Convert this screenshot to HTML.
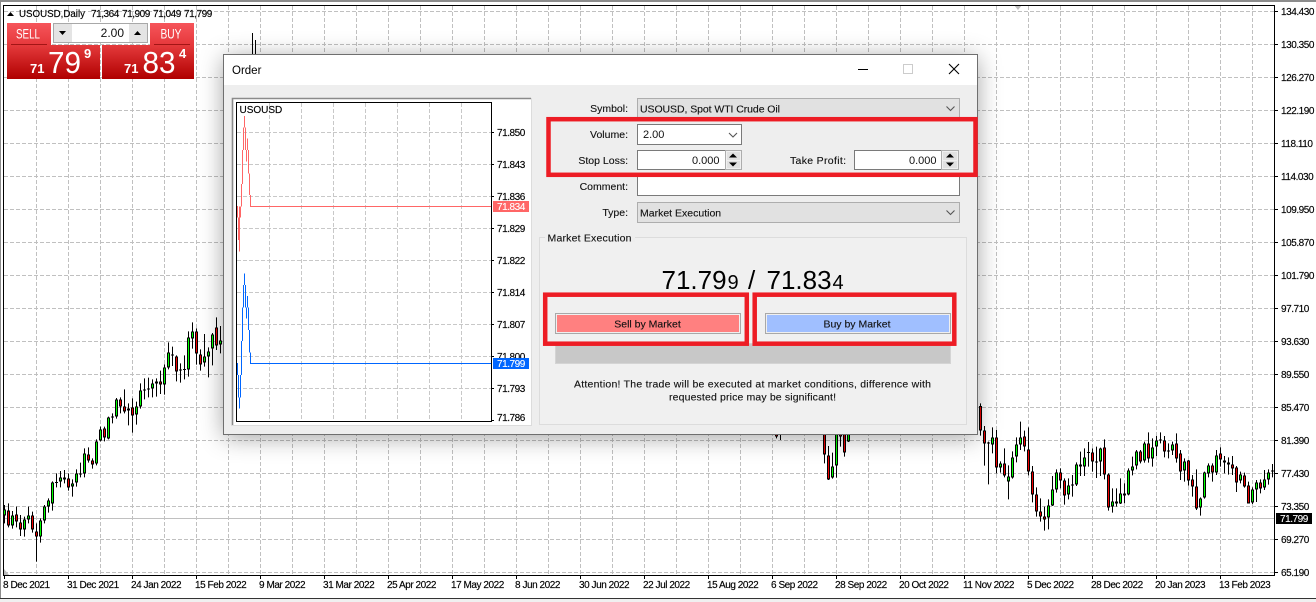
<!DOCTYPE html>
<html><head><meta charset="utf-8"><title>Order</title>
<style>
html,body{margin:0;padding:0;background:#fff;width:1316px;height:602px;overflow:hidden}
svg{display:block;font-family:"Liberation Sans",sans-serif}
.a{font-size:10px;letter-spacing:-.45px;fill:#000;stroke:#000;stroke-width:.15px}
.l{font-size:10.5px;fill:#111;stroke:#111;stroke-width:.12px}
.w{stroke:#fff;stroke-width:.12px}
</style></head><body>
<svg width="1316" height="602" viewBox="0 0 1316 602">
<rect width="1316" height="602" fill="#fff"/>
<rect x="0" y="0" width="1316" height="2" fill="#8c8c8c"/>
<rect x="0" y="0" width="1" height="598" fill="#8c8c8c"/>
<rect x="0" y="598" width="1316" height="1" fill="#333"/>
<rect x="0" y="599" width="1316" height="3" fill="#f0f0f0"/>

<!-- grid -->
<g stroke="#c0c0c0" stroke-dasharray="4 2" shape-rendering="crispEdges" fill="none">
<path d="M4 11.5H1274M4 44.5H1274M4 77.5H1274M4 110.5H1274M4 143.5H1274M4 176.5H1274M4 209.5H1274M4 242.5H1274M4 275.5H1274M4 308.5H1274M4 341.5H1274M4 374.5H1274M4 407.5H1274M4 440.5H1274M4 473.5H1274M4 506.5H1274M4 539.5H1274M4 572.5H1274"/>
<path d="M36.5 6V575M68.5 6V575M100.5 6V575M132.5 6V575M164.5 6V575M196.5 6V575M228.5 6V575M260.5 6V575M292.5 6V575M324.5 6V575M356.5 6V575M388.5 6V575M420.5 6V575M452.5 6V575M484.5 6V575M516.5 6V575M548.5 6V575M580.5 6V575M612.5 6V575M644.5 6V575M676.5 6V575M708.5 6V575M740.5 6V575M772.5 6V575M804.5 6V575M836.5 6V575M868.5 6V575M900.5 6V575M932.5 6V575M964.5 6V575M996.5 6V575M1028.5 6V575M1060.5 6V575M1092.5 6V575M1124.5 6V575M1156.5 6V575M1188.5 6V575M1220.5 6V575M1252.5 6V575"/>
</g>
<path d="M4 518.5H1274" stroke="#c0c0c0" shape-rendering="crispEdges"/>
<polygon points="1014,5 1022,5 1018,10" fill="#c0c0c0"/>
<polygon points="4,569 4,575 9,575" fill="#bbb"/>

<!-- left candles -->
<g transform="translate(0 310) scale(1 .33333)" fill="none" shape-rendering="crispEdges">
<path stroke="#000" d="M4.5 585V640M8.5 580V652M12.5 603V656M16.5 590V652M20.5 615V678M24.5 620V680M28.5 590V640M32.5 605V668M36.5 640V755M40.5 625V698M44.5 585V640M48.5 565V608M52.5 514V602M56.5 490V532M60.5 483V532M64.5 480V520M68.5 490V542M72.5 508V560M76.5 478V530M80.5 458V502M84.5 415V502M88.5 412V458M92.5 445V476M96.5 388V466M100.5 350V394M104.5 350V394M108.5 320V388M112.5 310V340M116.5 264V326M120.5 262V310M124.5 238V310M128.5 280V346M132.5 265V368M136.5 275V344M140.5 220V296M144.5 205V268M148.5 203V262M152.5 208V262M156.5 205V260M160.5 182V252M164.5 163V254M168.5 97V178M172.5 110V168M176.5 136V214M180.5 160V218M184.5 136V208M188.5 64V200M192.5 37V116M196.5 55V164M200.5 118V182M204.5 72V170M208.5 112V202M212.5 69V166M216.5 22V120M220.5 48V130"/>
<path stroke="#000" stroke-width="3" d="M4.5 598V616M8.5 602V646M12.5 616V646M16.5 613V634M20.5 637V658M24.5 628V658M28.5 616V628M32.5 616V658M36.5 664V680M40.5 631V680M44.5 589V631M48.5 571V589M52.5 517V580M56.5 516V519M60.5 502V514M64.5 502V508M68.5 505V532M72.5 520V529M76.5 490V517M80.5 490V493M84.5 430V490M88.5 433V451M92.5 451V463M96.5 394V461M100.5 358V391M104.5 355V382M108.5 322V385M112.5 319V322M116.5 268V319M120.5 268V290M124.5 289V304M128.5 295V301M132.5 292V316M136.5 289V313M140.5 241V289M144.5 238V241M148.5 235V238M152.5 220V235M156.5 214V220M160.5 214V223M164.5 172V223M168.5 127V172M172.5 133V136M176.5 139V184M180.5 178V181M184.5 177V180M188.5 82V178M192.5 64V85M196.5 64V130M200.5 133V163M204.5 139V157M208.5 124V139M212.5 73V115M216.5 52V106M220.5 91V103"/>
<path stroke="#00ff00" d="M4.5 601V613M12.5 619V643M24.5 631V655M28.5 619V625M40.5 634V677M44.5 592V628M48.5 574V586M52.5 520V577M60.5 505V511M72.5 523V526M76.5 493V514M84.5 433V487M96.5 397V458M100.5 361V388M108.5 325V382M116.5 271V316M128.5 298V298M136.5 292V310M140.5 244V286M152.5 223V232M156.5 217V217M164.5 175V220M168.5 130V169M188.5 85V175M192.5 67V82M204.5 142V154M208.5 127V136M212.5 76V112M220.5 94V100"/>
<path stroke="#f00000" d="M8.5 605V643M16.5 616V631M20.5 640V655M32.5 619V655M36.5 667V677M64.5 505V505M68.5 508V529M88.5 436V448M92.5 454V460M104.5 358V379M120.5 271V287M124.5 292V301M132.5 295V313M160.5 217V220M176.5 142V181M196.5 67V127M200.5 136V160M216.5 55V103"/>
</g>

<!-- right candles -->
<g transform="translate(0 400) scale(1 .33333)" fill="none" shape-rendering="crispEdges">
<path stroke="#000" d="M776.5 90V115M780.5 90V120M808.5 90V105M824.5 90V190M828.5 138V240M832.5 158V236M836.5 90V233M840.5 90V140M844.5 90V170M848.5 90V126M980.5 10V107M984.5 78V197M988.5 125V253M992.5 82V160M996.5 90V220M1000.5 184V218M1004.5 145V232M1008.5 196V298M1012.5 154V236M1016.5 112V187M1020.5 65V150M1024.5 92V154M1028.5 82V226M1032.5 198V307M1036.5 262V350M1040.5 295V365M1044.5 320V392M1048.5 298V388M1052.5 228V318M1056.5 208V278M1060.5 205V265M1064.5 235V314M1068.5 235V298M1072.5 225V290M1076.5 187V258M1080.5 155V228M1084.5 145V228M1088.5 126V200M1092.5 145V215M1096.5 140V234M1100.5 143V228M1104.5 118V238M1108.5 220V332M1112.5 265V338M1116.5 265V320M1120.5 235V312M1124.5 250V310M1128.5 205V286M1132.5 170V226M1136.5 150V208M1140.5 150V190M1144.5 125V188M1148.5 97V188M1152.5 115V200M1156.5 108V168M1160.5 97V130M1164.5 108V172M1168.5 130V175M1172.5 125V165M1176.5 100V188M1180.5 150V240M1184.5 175V245M1188.5 180V257M1192.5 225V290M1196.5 208V330M1200.5 292V347M1204.5 215V296M1208.5 190V232M1212.5 190V245M1216.5 150V225M1220.5 142V200M1224.5 168V220M1228.5 172V224M1232.5 168V225M1236.5 198V276M1240.5 215V250M1244.5 218V263M1248.5 245V310M1252.5 262V312M1256.5 240V306M1260.5 238V280M1264.5 210V270M1268.5 208V254M1272.5 192V232"/>
<path stroke="#000" stroke-width="3" d="M776.5 90V110M824.5 90V163M828.5 166V238M832.5 199V232M836.5 90V196M840.5 100V110M844.5 90V157M848.5 90V124M980.5 18V91M984.5 91V130M988.5 128V131M992.5 112V133M996.5 112V202M1000.5 190V202M1004.5 190V226M1008.5 229V244M1012.5 172V232M1016.5 133V169M1020.5 112V133M1024.5 109V139M1028.5 148V214M1032.5 214V283M1036.5 283V334M1040.5 334V350M1044.5 349V358M1048.5 316V352M1052.5 268V316M1056.5 217V268M1060.5 217V241M1064.5 241V286M1068.5 256V283M1072.5 253V256M1076.5 193V253M1080.5 193V199M1084.5 172V199M1088.5 156V159M1092.5 157V184M1096.5 184V187M1100.5 145V184M1104.5 142V223M1108.5 223V322M1112.5 304V319M1116.5 304V310M1120.5 280V310M1124.5 280V286M1128.5 211V283M1132.5 199V211M1136.5 154V196M1140.5 154V184M1144.5 130V181M1148.5 130V175M1152.5 142V175M1156.5 121V139M1160.5 118V121M1164.5 121V154M1168.5 151V154M1172.5 133V151M1176.5 130V175M1180.5 160V214M1184.5 184V211M1188.5 181V241M1192.5 238V259M1196.5 259V325M1200.5 295V322M1204.5 217V292M1208.5 196V220M1212.5 196V217M1216.5 166V217M1220.5 160V178M1224.5 181V187M1228.5 187V193M1232.5 193V205M1236.5 202V247M1240.5 223V241M1244.5 226V259M1248.5 256V310M1252.5 268V307M1256.5 247V268M1260.5 247V265M1264.5 238V262M1268.5 217V238M1272.5 211V214"/>
<path stroke="#00ff00" d="M832.5 202V229M836.5 90V193M848.5 90V121M992.5 115V130M1000.5 193V199M1008.5 232V241M1012.5 175V229M1016.5 136V166M1020.5 115V130M1048.5 319V349M1052.5 271V313M1056.5 220V265M1068.5 259V280M1076.5 196V250M1084.5 175V196M1100.5 148V181M1112.5 307V316M1120.5 283V307M1128.5 214V280M1132.5 202V208M1136.5 157V193M1144.5 133V178M1152.5 145V172M1156.5 124V136M1172.5 136V148M1184.5 187V208M1200.5 298V319M1204.5 220V289M1208.5 199V217M1216.5 169V214M1240.5 226V238M1252.5 271V304M1256.5 250V265M1264.5 241V259M1268.5 220V235"/>
<path stroke="#f00000" d="M776.5 90V107M824.5 90V160M828.5 169V235M840.5 103V107M844.5 90V154M980.5 21V88M984.5 94V127M996.5 115V199M1004.5 193V223M1024.5 112V136M1028.5 151V211M1032.5 217V280M1036.5 286V331M1040.5 337V347M1044.5 352V355M1060.5 220V238M1064.5 244V283M1080.5 196V196M1092.5 160V181M1104.5 145V220M1108.5 226V319M1116.5 307V307M1124.5 283V283M1140.5 157V181M1148.5 133V172M1164.5 124V151M1176.5 133V172M1180.5 163V211M1188.5 184V238M1192.5 241V256M1196.5 262V322M1212.5 199V214M1220.5 163V175M1224.5 184V184M1228.5 190V190M1232.5 196V202M1236.5 205V244M1244.5 229V256M1248.5 259V307M1260.5 250V262"/>
</g>
<!-- wicks above dialog -->
<path d="M252.5 33V55M255.5 40V55" stroke="#000" shape-rendering="crispEdges"/>

<!-- chart frame -->
<g fill="none" stroke="#000" shape-rendering="crispEdges">
<rect x="3.5" y="5.5" width="1271" height="570"/>
<path d="M1275 11.5h3M1275 44.5h3M1275 77.5h3M1275 110.5h3M1275 143.5h3M1275 176.5h3M1275 209.5h3M1275 242.5h3M1275 275.5h3M1275 308.5h3M1275 341.5h3M1275 374.5h3M1275 407.5h3M1275 440.5h3M1275 473.5h3M1275 506.5h3M1275 539.5h3M1275 572.5h3"/>
<path d="M4.5 576v3M68.5 576v3M132.5 576v3M196.5 576v3M260.5 576v3M324.5 576v3M388.5 576v3M452.5 576v3M516.5 576v3M580.5 576v3M644.5 576v3M708.5 576v3M772.5 576v3M836.5 576v3M900.5 576v3M964.5 576v3M1028.5 576v3M1092.5 576v3M1156.5 576v3M1220.5 576v3"/>
</g>

<!-- price axis -->
<g>
<text class="a" x="1281" y="15">134.430</text><text class="a" x="1281" y="48">130.350</text><text class="a" x="1281" y="81">126.270</text><text class="a" x="1281" y="114">122.190</text><text class="a" x="1281" y="147">118.110</text><text class="a" x="1281" y="180">114.030</text><text class="a" x="1281" y="213">109.950</text><text class="a" x="1281" y="246">105.870</text><text class="a" x="1281" y="279">101.790</text><text class="a" x="1281" y="312">97.710</text><text class="a" x="1281" y="345">93.630</text><text class="a" x="1281" y="378">89.550</text><text class="a" x="1281" y="411">85.470</text><text class="a" x="1281" y="444">81.390</text><text class="a" x="1281" y="477">77.430</text><text class="a" x="1281" y="510">73.350</text><text class="a" x="1281" y="543">69.270</text><text class="a" x="1281" y="576">65.190</text>
</g>
<rect x="1276" y="513" width="36" height="11" fill="#000"/>
<text class="w" x="1280" y="522" font-size="10" letter-spacing="-.45" fill="#fff">71.799</text>

<!-- date axis -->
<g>
<text class="a" x="3" y="588">8 Dec 2021</text><text class="a" x="67" y="588">31 Dec 2021</text><text class="a" x="131" y="588">24 Jan 2022</text><text class="a" x="195" y="588">15 Feb 2022</text><text class="a" x="259" y="588">9 Mar 2022</text><text class="a" x="323" y="588">31 Mar 2022</text><text class="a" x="387" y="588">25 Apr 2022</text><text class="a" x="451" y="588">17 May 2022</text><text class="a" x="515" y="588">8 Jun 2022</text><text class="a" x="579" y="588">30 Jun 2022</text><text class="a" x="643" y="588">22 Jul 2022</text><text class="a" x="707" y="588">15 Aug 2022</text><text class="a" x="771" y="588">6 Sep 2022</text><text class="a" x="835" y="588">28 Sep 2022</text><text class="a" x="899" y="588">20 Oct 2022</text><text class="a" x="963" y="588">11 Nov 2022</text><text class="a" x="1027" y="588">5 Dec 2022</text><text class="a" x="1091" y="588">28 Dec 2022</text><text class="a" x="1155" y="588">20 Jan 2023</text><text class="a" x="1219" y="588">13 Feb 2023</text>
</g>

<!-- header -->
<polygon points="7,16 14,16 10.5,12" fill="#000"/>
<text x="19" y="17" font-size="10" fill="#000" stroke="#000" stroke-width=".15" textLength="66" lengthAdjust="spacingAndGlyphs">USOUSD,Daily</text>
<text class="a" x="91" y="17">71,364</text><text class="a" x="122" y="17">71,909</text><text class="a" x="153" y="17">71,049</text><text class="a" x="184" y="17">71,799</text>

<!-- one click panel -->
<defs>
<linearGradient id="t" x1="0" y1="0" x2="0" y2="1"><stop offset="0" stop-color="#f6555b"/><stop offset="1" stop-color="#e5373a"/></linearGradient>
<linearGradient id="b" x1="0" y1="0" x2="0" y2="1"><stop offset="0" stop-color="#e53a3c"/><stop offset="1" stop-color="#b00000"/></linearGradient>
</defs>
<rect x="7" y="23" width="44" height="23" fill="url(#t)"/>
<rect x="150" y="23" width="44" height="23" fill="url(#t)"/>
<rect x="7" y="45" width="93" height="34" fill="url(#b)"/>
<rect x="102" y="45" width="92" height="34" fill="url(#b)"/>
<rect x="11" y="44" width="36" height="1" fill="#a31515"/>
<rect x="154" y="44" width="36" height="1" fill="#a31515"/>
<text x="16" y="38.5" font-size="14" fill="#fff" textLength="24" lengthAdjust="spacingAndGlyphs">SELL</text>
<text x="160.5" y="38.5" font-size="14" fill="#fff" textLength="21" lengthAdjust="spacingAndGlyphs">BUY</text>
<rect x="53.5" y="23.5" width="94" height="19" fill="#fff" stroke="#a8a8a8" shape-rendering="crispEdges"/>
<rect x="54" y="24" width="18" height="18" fill="#e4e4e4"/>
<rect x="129" y="24" width="18" height="18" fill="#e4e4e4"/>
<polygon points="59,31 66,31 62.5,35" fill="#000"/>
<polygon points="134,35 141,35 137.5,31" fill="#000"/>
<text x="124" y="37" font-size="12" fill="#111" text-anchor="end">2.00</text>
<g fill="#fff">
<text x="30" y="73" font-size="13" font-weight="bold">71</text><text x="48" y="73" font-size="31" textLength="33" lengthAdjust="spacingAndGlyphs">79</text><text x="84" y="58" font-size="13" font-weight="bold">9</text>
<text x="124" y="73" font-size="13" font-weight="bold">71</text><text x="142.5" y="73" font-size="31" textLength="33" lengthAdjust="spacingAndGlyphs">83</text><text x="179" y="58" font-size="13" font-weight="bold">4</text>
</g>

<!-- dialog -->
<rect x="224" y="55" width="753" height="379" fill="#f0f0f0" style="filter:drop-shadow(0 3px 12px rgba(0,0,0,.38))"/>
<rect x="224" y="85" width="753" height="349" fill="#eeeeee"/>
<rect x="224" y="55" width="753" height="30" fill="#fff"/>
<rect x="223.5" y="54.5" width="754" height="380" fill="none" stroke="#6f6f6f" shape-rendering="crispEdges"/>
<text x="232" y="74" font-size="11.5" fill="#000">Order</text>
<path d="M858 69.5h10" stroke="#000" shape-rendering="crispEdges"/>
<rect x="903.5" y="64.5" width="9" height="9" fill="none" stroke="#ccc" shape-rendering="crispEdges"/>
<path d="M949 64l10 10M959 64l-10 10" stroke="#000" stroke-width="1.1" fill="none"/>

<!-- preview -->
<rect x="232" y="98" width="299" height="327" fill="#fff"/>
<path d="M232.5 425V98.5H531" fill="none" stroke="#8a8a8a" stroke-width="1.6"/>
<path d="M231 425.5H531.5V98" fill="none" stroke="#dcdcdc" shape-rendering="crispEdges"/>
<g stroke="#c8c8c8" stroke-dasharray="4 2" fill="none" shape-rendering="crispEdges">
<path d="M237 132.5H491M237 164.5H491M237 196.5H491M237 228.5H491M237 260.5H491M237 292.5H491M237 324.5H491M237 356.5H491M237 388.5H491"/>
<path d="M269.5 103V421M301.5 103V421M333.5 103V421M365.5 103V421M397.5 103V421M429.5 103V421M461.5 103V421"/>
</g>
<g transform="translate(225 50) scale(.33333)" fill="none" stroke-width="3" shape-rendering="crispEdges">
<path stroke="#ff6666" d="M37.5 468V503M40.5 503V570M43.5 470V605M46.5 470V503M49.5 402V470M52.5 300V402M55.5 233V300M58.5 198V233M61.5 233V300M64.5 300V335M67.5 265V300M70.5 300V370M73.5 370V435M76.5 435V469.5H801"/>
</g>
<g transform="translate(225 240) scale(.33333)" fill="none" stroke-width="3" shape-rendering="crispEdges">
<path stroke="#0066ff" d="M37.5 369V405M40.5 405V472M43.5 472V506M46.5 405V472M49.5 303V405M52.5 202V303M55.5 135V202M58.5 100V135M61.5 135V202M64.5 202V236M67.5 168V202M70.5 202V270M73.5 270V338M76.5 338V370.5H801"/>
</g>
<rect x="236.5" y="102.5" width="255" height="319" fill="none" stroke="#000" shape-rendering="crispEdges"/>
<path d="M492 132.5h2M492 164.5h2M492 196.5h2M492 228.5h2M492 260.5h2M492 292.5h2M492 324.5h2M492 356.5h2M492 388.5h2M492 420.5h2" stroke="#000" shape-rendering="crispEdges"/>
<text x="239.5" y="113" font-size="10" fill="#000" stroke="#000" stroke-width=".15">USOUSD</text>
<text class="a" x="497" y="136">71.850</text><text class="a" x="497" y="168">71.843</text><text class="a" x="497" y="200">71.836</text><text class="a" x="497" y="232">71.829</text><text class="a" x="497" y="264">71.822</text><text class="a" x="497" y="296">71.814</text><text class="a" x="497" y="328">71.807</text><text class="a" x="497" y="360">71.800</text><text class="a" x="497" y="392">71.793</text><text class="a" x="497" y="421">71.786</text>
<rect x="493" y="201" width="36" height="11" fill="#ff6666"/>
<text class="w" x="497" y="210" font-size="10" letter-spacing="-.45" fill="#fff">71.834</text>
<rect x="493" y="358" width="36" height="11" fill="#0066ff"/>
<text class="w" x="497" y="367" font-size="10" letter-spacing="-.45" fill="#fff">71.799</text>

<!-- form -->
<g text-anchor="end">
<text class="l" x="628" y="112">Symbol:</text><text class="l" x="628" y="138">Volume:</text><text class="l" x="628" y="164">Stop Loss:</text><text class="l" x="628" y="190">Comment:</text><text class="l" x="628" y="216">Type:</text>
</g>
<text class="l" x="790" y="164" textLength="56">Take Profit:</text>
<g shape-rendering="crispEdges">
<rect x="637.5" y="98.5" width="322" height="20" fill="#e1e1e1" stroke="#adadad"/>
<rect x="637.5" y="124.5" width="104" height="20" fill="#fff" stroke="#7a7a7a"/>
<rect x="637.5" y="150.5" width="88" height="19" fill="#fff" stroke="#7a7a7a"/>
<rect x="725.5" y="150.5" width="16" height="19" fill="#f0f0f0" stroke="#adadad"/>
<rect x="727" y="152" width="13" height="8" fill="#e1e1e1"/><rect x="727" y="161" width="13" height="7" fill="#e1e1e1"/>
<rect x="854.5" y="150.5" width="87" height="19" fill="#fff" stroke="#7a7a7a"/>
<rect x="941.5" y="150.5" width="17" height="19" fill="#f0f0f0" stroke="#adadad"/>
<rect x="943" y="152" width="14" height="8" fill="#e1e1e1"/><rect x="943" y="161" width="14" height="7" fill="#e1e1e1"/>
<rect x="637.5" y="176.5" width="322" height="19" fill="#fff" stroke="#7a7a7a"/>
<rect x="637.5" y="202.5" width="322" height="20" fill="#e1e1e1" stroke="#adadad"/>
</g>
<path d="M946.5 106.5l4 4 4-4M946.5 210.5l4 4 4-4M729 133l4 4 4-4" fill="none" stroke="#555" stroke-width="1.1"/>
<polygon points="729,157.5 737,157.5 733,153.5" fill="#000"/><polygon points="729,162.5 737,162.5 733,166.5" fill="#000"/>
<polygon points="946,157.5 954,157.5 950,153.5" fill="#000"/><polygon points="946,162.5 954,162.5 950,166.5" fill="#000"/>
<text class="l" x="640" y="112.5" textLength="140">USOUSD, Spot WTI Crude Oil</text>
<text x="643" y="138" font-size="11" fill="#111">2.00</text>
<text x="719.5" y="164" font-size="11" fill="#111" text-anchor="end">0.000</text>
<text x="936.5" y="164" font-size="11" fill="#111" text-anchor="end">0.000</text>
<text class="l" x="640" y="216.5">Market Execution</text>

<!-- group box -->
<rect x="539.5" y="237.5" width="427" height="187" fill="#f0f0f0" stroke="#dcdcdc" shape-rendering="crispEdges"/>
<rect x="545" y="232" width="90" height="10" fill="#eeeeee"/>
<text class="l" x="547.5" y="241.5" textLength="84">Market Execution</text>

<g fill="#000" font-size="26">
<text x="661.5" y="289">71.79</text><text x="727.5" y="289" font-size="20">9</text>
<text x="748" y="289">/</text>
<text x="766.5" y="289">71.83</text><text x="832.5" y="289" font-size="20">4</text>
</g>

<rect x="555.5" y="343.5" width="395" height="20" fill="#c8c8c8" stroke="#d4d4d4" shape-rendering="crispEdges"/>
<g shape-rendering="crispEdges">
<rect x="555.5" y="313.5" width="185" height="20" fill="#efefef" stroke="#a8a8a8"/>
<rect x="557" y="315" width="182" height="17" fill="#ff8080"/>
<rect x="765.5" y="313.5" width="185" height="20" fill="#efefef" stroke="#a8a8a8"/>
<rect x="767" y="315" width="182" height="17" fill="#a0bfff"/>
</g>
<text class="l" x="647.5" y="327.5" text-anchor="middle">Sell by Market</text>
<text class="l" x="857" y="327.5" text-anchor="middle">Buy by Market</text>
<text class="l" x="752.5" y="387.5" text-anchor="middle" textLength="357">Attention! The trade will be executed at market conditions, difference with</text>
<text class="l" x="752.5" y="400.5" text-anchor="middle" textLength="167">requested price may be significant!</text>

<!-- red annotation boxes -->
<g fill="none" stroke="#ed1c24" stroke-width="4.5">
<rect x="548.5" y="119.2" width="427" height="55.6"/>
<rect x="545.2" y="294.7" width="201.6" height="49"/>
<rect x="754.7" y="294.7" width="199.6" height="49"/>
</g>
</svg>
</body></html>
